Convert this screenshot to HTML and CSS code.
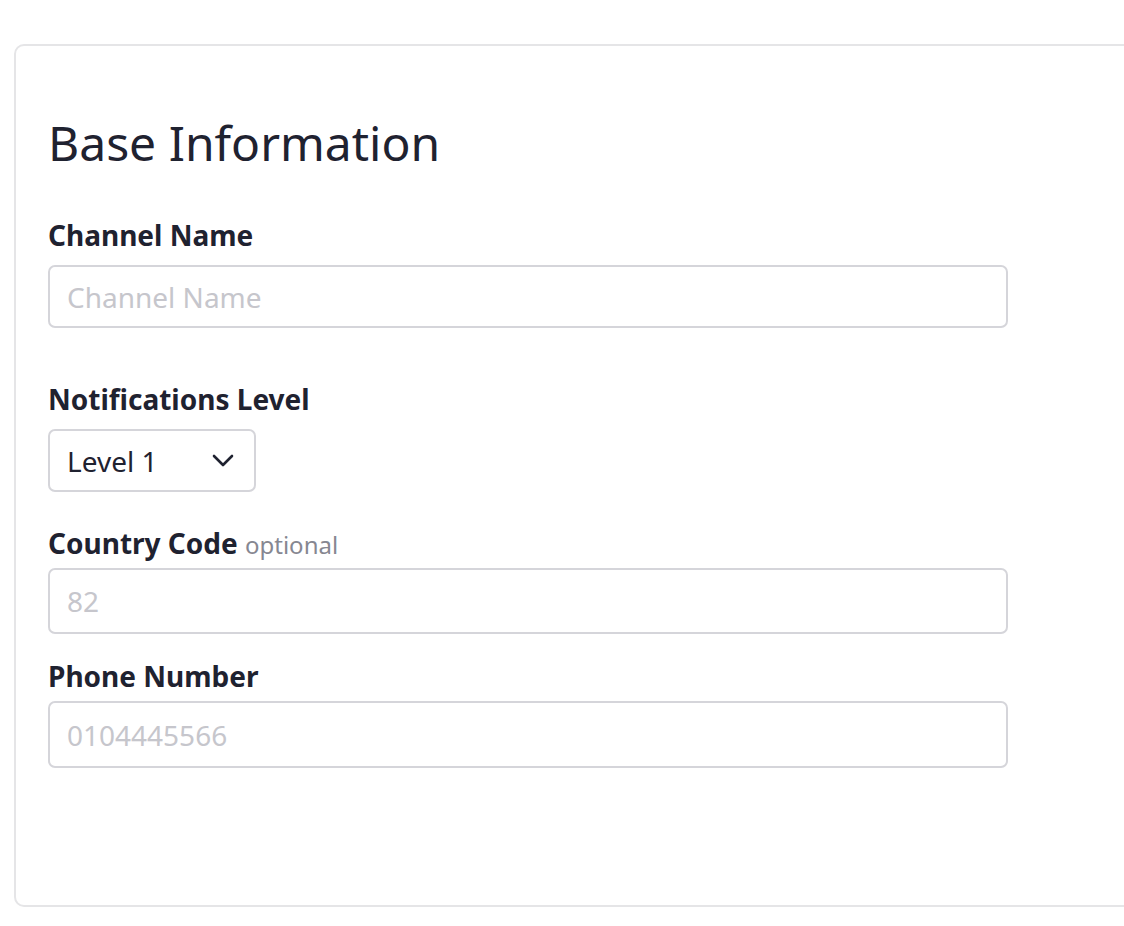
FILE: index.html
```html
<!DOCTYPE html>
<html lang="en">
<head>
<meta charset="utf-8">
<title>Base Information</title>
<link rel="stylesheet" href="styles.css">
</head>
<body>
<section class="card">
  <h1 class="title">Base Information</h1>

  <div class="field field-1">
    <label class="label">Channel Name</label>
    <div class="input input-1"><span class="placeholder">Channel Name</span></div>
  </div>

  <div class="field field-2">
    <label class="label">Notifications Level</label>
    <div class="select">
      <span class="select-value">Level 1</span>
      <svg class="chevron" width="22" height="13" viewBox="0 0 22 13" aria-hidden="true">
        <polyline points="2,2 11,11 20,2" fill="none" stroke="#1f2230" stroke-width="2.6" stroke-linecap="round" stroke-linejoin="round"/>
      </svg>
    </div>
  </div>

  <div class="field field-3">
    <label class="label label-tight">Country Code <span class="optional">optional</span></label>
    <div class="input input-2"><span class="placeholder">82</span></div>
  </div>

  <div class="field field-4">
    <label class="label label-tight">Phone Number</label>
    <div class="input input-3"><span class="placeholder">0104445566</span></div>
  </div>
</section>
</body>
</html>
```

FILE: styles.css
```css
html, body {
  margin: 0;
  padding: 0;
  background: #ffffff;
  overflow: hidden;
}

body {
  font-family: "Noto Sans", "Open Sans", sans-serif;
  color: #1f2230;
}

.card {
  box-sizing: border-box;
  margin: 44px 0 0 14px;
  width: 1160px;
  height: 863px;
  border: 2px solid #e5e5e7;
  border-radius: 10px;
  padding: 69px 32px 0 32px;
}

.title {
  margin: 0;
  font-size: 48px;
  line-height: 56px;
  font-weight: 400;
  color: #1f2230;
}

.field {
  display: flex;
  flex-direction: column;
  align-items: flex-start;
}

.field-1 { margin-top: 47px; }
.field-2 { margin-top: 54px; }
.field-3 { margin-top: 34px; }
.field-4 { margin-top: 25px; }

.label {
  font-size: 28px;
  line-height: 34px;
  font-weight: 700;
  color: #1f2230;
  margin-bottom: 13px;
}

.label-tight {
  margin-bottom: 8px;
}

.optional {
  font-size: 24px;
  line-height: 1;
  font-weight: 400;
  color: #868791;
}

.input {
  box-sizing: border-box;
  width: 960px;
  border: 2px solid #d5d5da;
  border-radius: 7px;
  display: flex;
  align-items: center;
  padding-left: 17px;
  font-size: 28px;
}

.input-1 { height: 63px; }
.input-2 { height: 66px; }
.input-3 { height: 67px; }

.placeholder {
  color: #c6c6cc;
}

.select {
  box-sizing: border-box;
  width: 208px;
  height: 63px;
  border: 2px solid #d5d5da;
  border-radius: 7px;
  display: flex;
  align-items: center;
  justify-content: space-between;
  padding: 0 20px 0 17px;
  font-size: 28px;
  color: #1f2230;
}

.chevron {
  display: block;
}
```
